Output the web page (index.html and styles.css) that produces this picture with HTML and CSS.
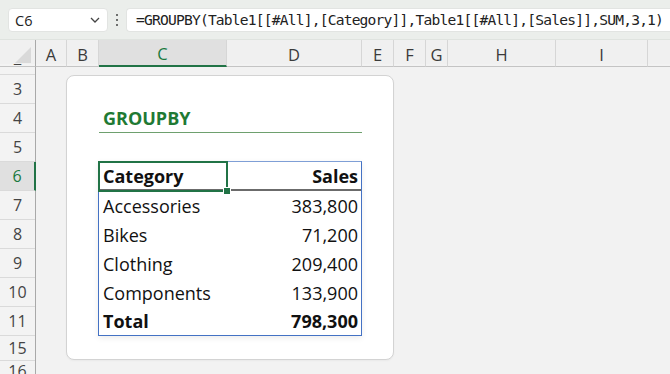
FILE: index.html
```html
<!DOCTYPE html>
<html>
<head>
<meta charset="utf-8">
<link rel="stylesheet" href="styles.css">
</head>
<body>
<div class="app">
  <div class="topbar">
    <div class="namebox">
      <span class="nb-text">C6</span>
      <svg class="chev" width="10" height="6" viewBox="0 0 10 6"><path d="M1 1 L5 5 L9 1" fill="none" stroke="#444" stroke-width="1.3"/></svg>
    </div>
    <div class="vdots"><span></span><span></span><span></span></div>
    <div class="formula">=GROUPBY(Table1[[#All],[Category]],Table1[[#All],[Sales]],SUM,3,1)</div>
  </div>
  <div class="colheads">
    <div class="corner"><div class="tri"></div></div>
    <div class="ch">A</div>
    <div class="ch">B</div>
    <div class="ch sel">C</div>
    <div class="ch">D</div>
    <div class="ch">E</div>
    <div class="ch">F</div>
    <div class="ch">G</div>
    <div class="ch">H</div>
    <div class="ch">I</div>
    <div class="ch last"></div>
  </div>
  <div class="body">
    <div class="rowheads">
      <div class="rh r2"><span>2</span></div>
      <div class="rh"><span>3</span></div>
      <div class="rh"><span>4</span></div>
      <div class="rh"><span>5</span></div>
      <div class="rh sel"><span>6</span></div>
      <div class="rh"><span>7</span></div>
      <div class="rh"><span>8</span></div>
      <div class="rh"><span>9</span></div>
      <div class="rh"><span>10</span></div>
      <div class="rh"><span>11</span></div>
      <div class="rh r15"><span>15</span></div>
      <div class="rh r16"><span>16</span></div>
    </div>
    <div class="cells">
      <div class="card">
        <div class="title">GROUPBY</div>
        <div class="table">
          <div class="selbox"><div class="handle"></div></div>
          <div class="row head"><div class="c1">Category</div><div class="c2">Sales</div></div>
          <div class="row"><div class="c1">Accessories</div><div class="c2">383,800</div></div>
          <div class="row"><div class="c1">Bikes</div><div class="c2">71,200</div></div>
          <div class="row"><div class="c1">Clothing</div><div class="c2">209,400</div></div>
          <div class="row"><div class="c1">Components</div><div class="c2">133,900</div></div>
          <div class="row total"><div class="c1">Total</div><div class="c2">798,300</div></div>
        </div>
      </div>
    </div>
  </div>
</div>
</body>
</html>
```
FILE: styles.css
```css
* { box-sizing: border-box; }
html, body { margin: 0; padding: 0; }
body { background: #f2f2f2; font-family: "Open Sans", "Noto Sans", sans-serif; }
.app { width: 670px; height: 374px; overflow: hidden; display: flex; flex-direction: column; }

.topbar {
  height: 40px; flex: none;
  background: #ebeeeb;
  display: flex; align-items: flex-start;
  padding: 8px 0 0 8px;
  border-bottom: 1px solid #dfe3df;
}
.namebox {
  width: 100px; height: 24px;
  background: #fff; border: 1px solid #e2e4e2; border-radius: 4px;
  display: flex; align-items: center; justify-content: space-between;
  padding: 0 7px 0 6px;
}
.nb-text { font-size: 14.5px; color: #222; }
.vdots { width: 18px; height: 24px; display: flex; flex-direction: column; align-items: center; justify-content: center; gap: 2.5px; }
.vdots span { width: 2.5px; height: 2.5px; background: #444; border-radius: 50%; }
.formula {
  flex: 1; height: 24px;
  background: #fff; border: 1px solid #e2e4e2; border-right: none; border-radius: 4px 0 0 4px;
  font-family: "DejaVu Sans Mono", "Liberation Mono", monospace;
  font-size: 14.6px; letter-spacing: -0.8px; color: #222;
  line-height: 22px; padding-left: 9px; white-space: nowrap; overflow: hidden;
}

.colheads {
  height: 24px; flex: none;
  display: grid;
  grid-template-columns: 36px 31px 32px 128px 135px 32px 32px 22px 108px 92px 1fr;
  background: #f0f0f0;
}
.corner { border-right: 1px solid #a9a9a9; border-bottom: 1px solid #c4c4c4; position: relative; }
.tri {
  position: absolute; right: 4px; bottom: 3px; width: 0; height: 0;
  border-left: 16px solid transparent; border-bottom: 16px solid #d9d9d9;
}
.ch {
  border-right: 1px solid #d6d6d6; border-bottom: 1px solid #c4c4c4;
  display: flex; align-items: center; justify-content: center;
  font-size: 16.5px; color: #3b3b3b; padding-top: 2px;
}
.ch.sel { background: #e0e0e0; color: #1a7a3e; border-bottom: 2px solid #217346; }
.ch.last { border-right: none; }

.body { flex: 1; display: flex; }
.rowheads { width: 36px; flex: none; border-right: 1px solid #a9a9a9; background: #f3f3f3; display: flex; flex-direction: column; }
.rh {
  height: 29px; flex: none; border-bottom: 1px solid #dadada;
  display: flex; align-items: center; justify-content: center;
  font-size: 16px; color: #444; overflow: hidden;
}
.rh span { display: block; line-height: 29px; height: 29px; flex: none; }
.rh.r2 { height: 11px; align-items: flex-end; }
.rh.r15 { height: 25px; }
.rh.r16 { height: 13px; align-items: flex-start; border-bottom: none; }
.rh.r16 span { margin-top: -4px; }
.rh.sel { background: #e0e0e0; color: #1a7a3e; border-right: 2px solid #217346; margin-right: -1px; }

.cells { flex: 1; position: relative; }
.card {
  position: absolute; left: 30px; top: 11px; width: 328px; height: 285px;
  background: #fff; border: 1px solid #d3d3d3; border-radius: 8px;
  box-shadow: 0 1px 2px rgba(0,0,0,0.04);
  padding: 28px 0 0 32px;
}
.title {
  width: 263px; height: 29px;
  border-bottom: 1.5px solid #6ea06e;
  color: #1f7a34; font-weight: 700; font-size: 18px;
  padding-left: 4px; line-height: 28px;
}
.table {
  position: relative;
  margin-top: 28px; margin-left: -1px;
  width: 264px;
  border: 1px solid #4472c4; border-top-color: #7f9fd6;
  box-shadow: 0 2px 6px rgba(0,0,0,0.08);
  font-size: 18px; color: #111;
}
.row { height: 29px; display: grid; grid-template-columns: 128px 1fr; align-items: center; }
.row.head { height: 29px; border-bottom: 2px solid #6b6b6b; font-weight: 700; }
.row.total { height: 28px; font-weight: 700; }
.c1 { padding-left: 4px; white-space: nowrap; }
.c2 { padding-right: 3px; text-align: right; white-space: nowrap; }
.selbox {
  position: absolute; left: -1px; top: -1px; width: 130px; height: 31px;
  border: 2px solid #217346; z-index: 2;
}
.handle {
  position: absolute; right: -4px; bottom: -4px; width: 6px; height: 6px;
  background: #217346; outline: 1px solid #fff;
}
```
